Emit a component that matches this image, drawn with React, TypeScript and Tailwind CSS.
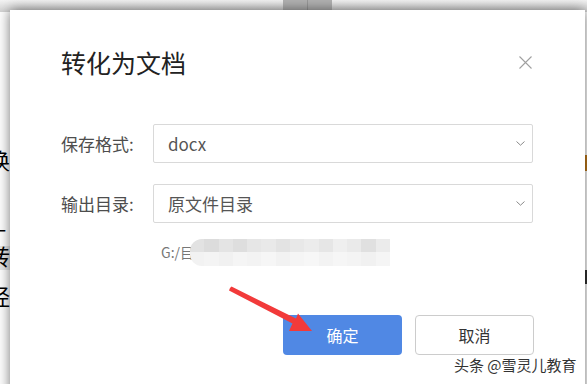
import { useState } from 'react';

const cjk = '"Noto Sans CJK SC", "Noto Sans", sans-serif';

// pixelated blur over the private path
const topRow = [
    'bg-[#e2e2e2]', 'bg-[#dcdcdc]', 'bg-[#e4e4e4]', 'bg-[#dedede]', 'bg-[#e6e6e6]', 'bg-[#e9e9e9]', 'bg-[#e3e3e3]',
    'bg-[#e8e8e8]', 'bg-[#ececec]', 'bg-[#e6e6e6]', 'bg-[#efefef]', 'bg-[#eaeaea]', 'bg-[#e0e0e0]', 'bg-[#ebebeb]',
];
const bottomRow = [
    'bg-[#f2f2f2]', 'bg-[#f4f4f4]', 'bg-[#f1f1f1]', 'bg-[#f5f5f5]', 'bg-[#f3f3f3]', 'bg-[#f6f6f6]', 'bg-[#f2f2f2]',
    'bg-[#f5f5f5]', 'bg-[#f7f7f7]', 'bg-[#f3f3f3]', 'bg-[#f6f6f6]', 'bg-[#f4f4f4]', 'bg-[#f1f1f1]', 'bg-[#f5f5f5]',
];

function Chevron() {
    return (
        <svg width="9" height="5" viewBox="0 0 9 5" fill="none" stroke="#8a8a8a" strokeWidth="1">
            <path d="M0.5 0.5 L4.5 4.2 L8.5 0.5" />
        </svg>
    );
}

function SelectRow({ label, value }: { label: string; value: string }) {
    return (
        <div className="flex items-center">
            <div className="w-[92px] text-[17px] text-[#4d4d4d]">{label}</div>
            <div className="flex-1 h-[39px] border border-[#d9d9d9] rounded-[2px] flex items-center justify-between pl-[14px] pr-[7px]">
                <span className="text-[17px] text-[#555555]">{value}</span>
                <Chevron />
            </div>
        </div>
    );
}

export default function App() {
    const [format] = useState('docx');

    return (
        <div className="relative w-[587px] h-[384px] overflow-hidden bg-white" style={{ fontFamily: cjk }}>
            {/* document behind the dialog */}
            <div className="h-[12px] bg-gradient-to-b from-[#f4f4f4] to-[#d2d2d2] flex">
                <div className="w-[283px]" />
                <div className="w-[25px] bg-[#b3b3b3] border-r border-[#9a9a9a]" />
                <div className="w-[24px] bg-[#b3b3b3]" />
            </div>
            <div className="ml-[-12px] w-[24px] flex flex-col text-[22px] leading-[24px] text-black" style={{ fontFamily: '"Liberation Serif", "Noto Sans CJK SC", serif' }}>
                <div className="h-[138px]" />
                <div>换</div>
                <div className="h-[52px]" />
                <div className="text-[18px] leading-[12px]">一</div>
                <div className="h-[8px]" />
                <div className="bg-[#e6e6e6]">转</div>
                <div className="h-[16px]" />
                <div>经</div>
                <div className="h-[10px]" />
                <div>。</div>
            </div>
            <div className="absolute left-[585px] top-[155px] w-[2px] h-[16px] bg-[#c07a1a]" />
            <div className="absolute left-[585px] top-[270px] w-[2px] h-[14px] bg-[#333333]" />

            {/* dialog */}
            <div className="absolute left-[10px] top-[10px] w-[575px] h-[400px] bg-white shadow-[0_0_12px_rgba(0,0,0,0.55)] pl-[51px] pr-[52px] pt-[35px]">
                <div className="flex items-center justify-between h-[34px]">
                    <div className="text-[25px] leading-[34px] text-[#222222]">转化为文档</div>
                    <svg width="13" height="13" viewBox="0 0 13 13" stroke="#a0a0a0" strokeWidth="1.1" className="mr-[1px]">
                        <path d="M0.5 0.5 L12.5 12.5 M12.5 0.5 L0.5 12.5" />
                    </svg>
                </div>

                <div className="mt-[45px] flex flex-col gap-[21px]">
                    <SelectRow label="保存格式:" value={format} />
                    <SelectRow label="输出目录:" value="原文件目录" />
                </div>

                <div className="mt-[16px] ml-[100px] h-[27px] flex items-center">
                    <span className="text-[14px] text-[#777777]">G:/目</span>
                    <div className="ml-[-4px] w-[200px] h-[27px] rounded-l-[12px] overflow-hidden flex flex-col">
                        <div className="flex h-[13px]">
                            {topRow.map((c, i) => (
                                <div key={i} className={`flex-1 ${c}`} />
                            ))}
                        </div>
                        <div className="flex h-[14px]">
                            {bottomRow.map((c, i) => (
                                <div key={i} className={`flex-1 ${c}`} />
                            ))}
                        </div>
                    </div>
                </div>

                <div className="mt-[49px] mr-[-1px] flex justify-end gap-[13px]">
                    <button className="w-[119px] h-[40px] rounded-[4px] bg-[#5088e4] text-white text-[16px]">确定</button>
                    <button className="w-[119px] h-[40px] rounded-[4px] border border-[#cccccc] bg-white text-[#333333] text-[16px]">取消</button>
                </div>
            </div>

            {/* red arrow annotation */}
            <svg className="absolute left-0 top-0 pointer-events-none" width="587" height="384" viewBox="0 0 587 384">
                <polygon points="230,288 231.5,286.6 296,318.5 298,313.5 312,331 289,331 292.5,323.6 229,290.4" fill="#f23a3a" />
            </svg>

            {/* watermark */}
            <div className="absolute left-[454px] top-[355px] text-[15px] leading-[20px] text-[#333333] [text-shadow:0_0_2px_#ffffff]">
                头条 @雪灵儿教育
            </div>
        </div>
    );
}
